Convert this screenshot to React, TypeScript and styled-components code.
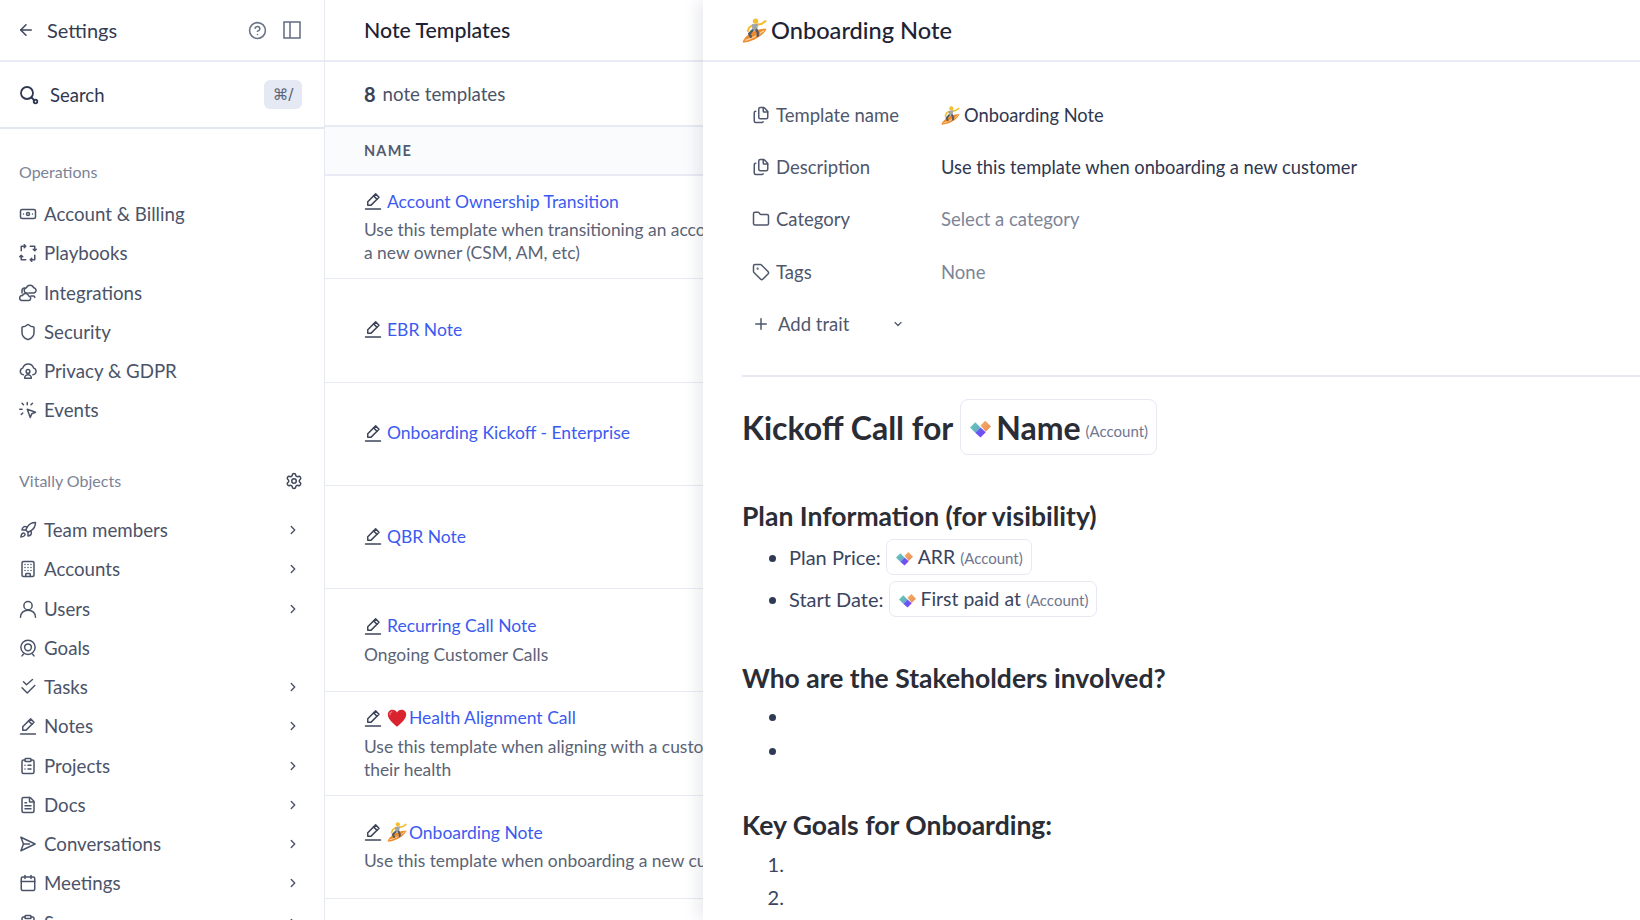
import React from 'react';
import styled, { createGlobalStyle } from 'styled-components';
import {
  ArrowLeft,
  Banknote,
  Building,
  Calendar,
  ChevronDown,
  ChevronRight,
  CircleHelp,
  ClipboardList,
  FileText,
  Files,
  Folder,
  Plus,
  Rocket,
  Settings,
  Shield,
  Tag,
} from 'lucide-react';

const GlobalStyle = createGlobalStyle`
  html, body { margin: 0; padding: 0; height: 100%; overflow: hidden; }
  body { font-family: Lato, "Liberation Sans", sans-serif; background: #fff; color: #2a3147; }
  * { box-sizing: border-box; }
`;

const Page = styled.div`
  position: relative;
  display: flex;
  width: 1640px;
  height: 920px;
  overflow: hidden;
`;

const Sidebar = styled.aside`
  flex: 0 0 325px;
  height: 920px;
  border-right: 1px solid #e6e9f2;
  overflow: hidden;
`;

const SideHead = styled.div`
  display: flex;
  align-items: center;
  height: 62px;
  padding: 0 23px 0 17px;
  border-bottom: 2px solid #e8ebf3;
  color: #3b4358;
`;

const SideTitle = styled.div`
  flex: 1;
  margin-left: 12px;
  font-size: 20px;
  color: #343c52;
`;

const HeadIcons = styled.div`
  display: flex;
  align-items: center;
  gap: 16px;
  color: #6b7388;
`;

const SearchRow = styled.div`
  display: flex;
  align-items: center;
  height: 67px;
  padding: 0 22px 0 19px;
  border-bottom: 2px solid #e3e7f1;
  color: #2f3750;
`;

const SearchLabel = styled.div`
  flex: 1;
  margin-left: 11px;
  font-size: 18.5px;
`;

const Kbd = styled.div`
  display: flex;
  align-items: center;
  justify-content: center;
  width: 38px;
  height: 29px;
  border-radius: 6px;
  background: #e5e9f3;
  color: #5b6478;
  font-size: 15.5px;
  font-family: "DejaVu Sans", sans-serif;
`;

const SectionLabel = styled.div<{ $spaced?: boolean }>`
  display: flex;
  align-items: center;
  justify-content: space-between;
  height: 24px;
  margin-top: ${(p) => (p.$spaced ? '38.5px' : '30px')};
  margin-bottom: ${(p) => (p.$spaced ? '18px' : '11.5px')};
  padding: 0 21px 0 19px;
  font-size: 16px;
  color: #7b8397;

  svg { color: #3f475c; }
`;

const NavRow = styled.div`
  display: flex;
  align-items: center;
  height: 39.25px;
  padding: 0 24px 0 19px;
  font-size: 18.7px;
  color: #4b5368;

  > svg:first-child { flex: 0 0 18px; color: #4b5368; margin-right: 7px; }
`;

const NavLabel = styled.span`
  flex: 1;
`;

const ListPane = styled.section`
  flex: 1;
  min-width: 0;
  overflow: hidden;
`;

const ListTitle = styled.div`
  display: flex;
  align-items: center;
  height: 62px;
  padding-left: 39px;
  border-bottom: 2px solid #e8ebf3;
  font-size: 21.3px;
  font-weight: 500;
  color: #1d2334;
`;

const CountRow = styled.div`
  display: flex;
  align-items: center;
  gap: 7px;
  height: 65px;
  padding-left: 39px;
  border-bottom: 2px solid #e8ebf3;
  font-size: 18.7px;
  color: #4b5368;

  b { font-size: 20px; font-weight: 700; color: #3a4257; }
`;

const ColumnHead = styled.div`
  display: flex;
  align-items: center;
  height: 49px;
  padding-left: 39px;
  border-bottom: 2px solid #e8ebf3;
  background: #fafbfd;
  font-size: 14.5px;
  font-weight: 700;
  letter-spacing: 1.2px;
  color: #535b70;
`;

const TemplateRow = styled.div`
  display: flex;
  flex-direction: column;
  justify-content: center;
  width: 470px;
  height: 103.3px;
  padding: 0 0 2px 39px;
  border-bottom: 1.5px solid #e8ebf3;
`;

const TemplateName = styled.div`
  display: flex;
  align-items: center;
  height: 26px;
  font-size: 17.5px;
  color: #3b5bf0;

  > svg:first-child { flex: 0 0 18px; color: #3d4559; margin-right: 5px; }
  > svg + svg { flex: 0 0 20px; margin-right: 2px; }
`;

const TemplateDesc = styled.div`
  width: 398px;
  margin-top: 4px;
  font-size: 17.4px;
  line-height: 23px;
  color: #5b6376;
`;

const Drawer = styled.section`
  position: absolute;
  top: 0;
  left: 703px;
  bottom: 0;
  right: 0;
  background: #fff;
  box-shadow: -6px 0 14px rgba(60, 70, 100, 0.1);
  overflow: hidden;
`;

const DrawerHead = styled.div`
  display: flex;
  align-items: center;
  gap: 4px;
  height: 62px;
  padding-left: 39px;
  border-bottom: 2px solid #e8ebf3;
  font-size: 23.6px;
  font-weight: 500;
  color: #1d2334;
`;

const Traits = styled.div`
  margin: 27px 0 0 39px;
  padding-bottom: 25px;
  border-bottom: 2px solid #e6e9f2;
`;

const TraitRow = styled.div`
  display: flex;
  align-items: center;
  height: 52.2px;
  padding-left: 10px;
  font-size: 18.5px;
`;

const TraitLabel = styled.div`
  display: flex;
  align-items: center;
  gap: 6px;
  flex: 0 0 189px;
  color: #4f576c;

  svg { flex: 0 0 18px; color: #4f576c; }
`;

const TraitValue = styled.div<{ $muted?: boolean }>`
  display: flex;
  align-items: center;
  gap: 4px;
  font-size: ${(p) => (p.$muted ? '18.5px' : '18.3px')};
  color: ${(p) => (p.$muted ? '#7d8598' : '#2f3750')};
`;

const AddTrait = styled.div`
  display: flex;
  align-items: center;
  height: 52.2px;
  padding-left: 10px;
  font-size: 18.5px;
  color: #4f576c;

  svg:first-child { margin-right: 8px; }
  svg:last-child { margin-left: 43px; }
`;

const Doc = styled.article`
  margin-left: 39px;
  color: #2a2d36;
`;

const H1 = styled.h1`
  display: flex;
  align-items: center;
  gap: 7px;
  margin: 22px 0 0;
  font-size: 32px;
  font-weight: 700;
  line-height: 57px;
  color: #2a2d36;
`;

const H2 = styled.h2<{ $gap: number }>`
  margin: ${(p) => p.$gap}px 0 0;
  font-size: 26.5px;
  font-weight: 700;
  line-height: 36px;
  color: #2a2d36;
`;

const Ul = styled.ul<{ $gap: number }>`
  margin: ${(p) => p.$gap}px 0 0;
  padding: 0 0 0 47px;
  font-size: 20px;
  color: #3a4460;

  li { min-height: 34.5px; line-height: 34.5px; }
  li::marker { color: #2f3a55; }
`;

const Ol = styled.ol`
  margin: 5px 0 0;
  padding: 0 0 0 47px;
  font-size: 20px;
  color: #3a4460;

  li { height: 33.5px; line-height: 33.5px; }
`;

const FieldLine = styled.li`
  && { height: 42px; line-height: 42px; }
`;

const Chip = styled.span<{ $big?: boolean }>`
  display: inline-flex;
  align-items: center;
  vertical-align: ${(p) => (p.$big ? 'baseline' : '-1px')};
  height: ${(p) => (p.$big ? '56px' : '36px')};
  padding: 0 8px 0 9px;
  margin-left: ${(p) => (p.$big ? '0' : '5px')};
  border: 1.5px solid #e6e9f4;
  border-radius: ${(p) => (p.$big ? '8px' : '7px')};
  font-size: ${(p) => (p.$big ? '32px' : '19.4px')};
  font-weight: ${(p) => (p.$big ? 700 : 400)};
  color: ${(p) => (p.$big ? '#2a2d36' : '#3a4460')};

  svg { margin-right: 5px; }
`;

const ChipScope = styled.span<{ $big?: boolean }>`
  margin-left: 5px;
  margin-top: ${(p) => (p.$big ? '9px' : '2px')};
  font-size: 15px;
  font-weight: 400;
  color: #6f7690;
`;

type IconProps = { size?: number };

const Stroke = ({ size = 18, children }: IconProps & { children: React.ReactNode }) => (
  <svg width={size} height={size} viewBox="0 0 24 24" fill="none" stroke="currentColor" strokeWidth="2" strokeLinecap="round" strokeLinejoin="round">
    {children}
  </svg>
);

const NotePen = ({ size = 18 }: IconProps) => (
  <Stroke size={size}>
    <path d="M2 22.5h20" />
    <path d="M15.5 2.5l4.5 4.5L9.5 17.5H5v-4.5z" />
    <path d="M12.8 5.2l4.5 4.5" />
  </Stroke>
);

const SearchKey = () => (
  <svg width="20" height="20" viewBox="0 0 20 20" fill="none" stroke="currentColor" strokeWidth="1.8" strokeLinecap="round">
    <circle cx="8" cy="8" r="6" />
    <path d="M12.5 12.5l3 3" />
    <circle cx="16.5" cy="16.5" r="1.8" />
  </svg>
);

const PaneToggle = () => (
  <svg width="18" height="18" viewBox="0 0 18 18" fill="none" stroke="currentColor" strokeWidth="1.6">
    <rect x="1" y="1" width="16" height="16" />
    <path d="M7 1v16" />
  </svg>
);

const Playbook = () => (
  <Stroke>
    <path d="M3 9V3h6M7 1l2 2-2 2" />
    <path d="M15 3h6v6M23 7l-2 2-2-2" />
    <path d="M21 15v6h-6M17 23l-2-2 2-2" />
    <path d="M9 21H3v-6M1 17l2-2 2 2" />
  </Stroke>
);

const Clouds = () => (
  <Stroke>
    <path d="M13 12h6a3.5 3.5 0 0 0 .5-7A5 5 0 0 0 10 5a3.5 3.5 0 0 0 1 7" />
    <path d="M3.5 22H12a3 3 0 0 0 1-6 4.5 4.5 0 0 0-8.5-.5A3.3 3.3 0 0 0 3.5 22z" />
    <path d="M4 12V8a3 3 0 0 1 4-2.5M16 16h3a2 2 0 0 1 2 2" />
  </Stroke>
);

const PrivacyCloud = () => (
  <Stroke>
    <path d="M6 17a4.5 4.5 0 0 1-1-8.800 7.5 7.5 0 0 1 14.5 0A4.5 4.5 0 0 1 18.5 17" />
    <circle cx="12" cy="12.5" r="2.5" />
    <path d="M7.5 21.5a4.5 4.5 0 0 1 9 0z" />
  </Stroke>
);

const ClickBurst = () => (
  <Stroke>
    <path d="M11 11l4 11 2-5 5-2z" />
    <path d="M11 2v3M4 11H1M6 5L4 3M16 5l2-2M5 16l-2 2" />
  </Stroke>
);

const GoalTarget = () => (
  <Stroke>
    <circle cx="12" cy="11" r="9.5" />
    <circle cx="12" cy="11" r="4.5" />
    <path d="M6 20l-2 2.5M18 20l2 2.5" />
  </Stroke>
);

const StackedChecks = () => (
  <Stroke>
    <path d="M6 5l4 4 8-7" />
    <path d="M4 13l7 7 10-10" />
  </Stroke>
);

const PaperPlane = () => (
  <Stroke>
    <path d="M2.5 3l19 9-19 9 3.500-9z" />
    <path d="M6 12h8" />
  </Stroke>
);

const Person = () => (
  <Stroke>
    <circle cx="12" cy="7.5" r="5.5" />
    <path d="M2 23c0-5.500 4-9.500 10-9.500S22 17.500 22 23" />
  </Stroke>
);

const SurferEmoji = ({ size = 20 }: IconProps) => (
  <svg width={size} height={size} viewBox="0 0 24 24">
    <path d="M.5 23.500c7 .5 19-5 23-13-6-.5-11 1.500-15 4-4 2.500-7 5.500-8 9z" fill="#ef8a2a" />
    <path d="M3 21.500c6-1.500 13-5.500 18-9.500" stroke="#fbd29c" strokeWidth="1.2" fill="none" />
    <circle cx="13" cy="3" r="2.6" fill="#f3bf2f" />
    <path d="M15 6.500l4-1 3.500-2.500" stroke="#f3bf2f" strokeWidth="2" fill="none" strokeLinecap="round" />
    <path d="M10 7L7 9l-1.500 3.500" stroke="#f3bf2f" strokeWidth="2" fill="none" strokeLinecap="round" />
    <path d="M9.500 6l6-.5-1 6.500-4.500.5z" fill="#a0a5ab" />
    <path d="M10 12l-3 3 1.500 3M14 11.500l1.500 3.500-.5 2" stroke="#565b62" strokeWidth="2.4" fill="none" strokeLinecap="round" />
  </svg>
);

const HeartEmoji = () => (
  <svg width="20" height="20" viewBox="0 0 24 24">
    <path d="M12 22.500C5 16.500 1 12.500 1 7.800 1 4.300 3.700 2 6.700 2 9 2 11 3.200 12 5.300 13 3.200 15 2 17.300 2 20.300 2 23 4.300 23 7.800c0 4.700-4 8.700-11 14.700z" fill="#d9232e" />
    <path d="M6 4.500C4.300 5 3.300 6.500 3.500 8.300" stroke="#f07a80" strokeWidth="1.4" fill="none" strokeLinecap="round" />
  </svg>
);

const VitallyMark = ({ size = 16, id }: IconProps & { id: string }) => (
  <svg width={size} height={size} viewBox="0 0 20 20">
    <defs>
      <linearGradient id={`${id}-t`} x1="0" y1="0" x2="1" y2="1">
        <stop offset="0" stopColor="#5fd0b4" />
        <stop offset="1" stopColor="#6c9ec8" />
      </linearGradient>
      <linearGradient id={`${id}-o`} x1="0" y1="0" x2="1" y2="1">
        <stop offset="0" stopColor="#f6b05c" />
        <stop offset="1" stopColor="#e98a62" />
      </linearGradient>
      <linearGradient id={`${id}-p`} x1="0" y1="0" x2="1" y2="1">
        <stop offset="0" stopColor="#4d6cf5" />
        <stop offset="1" stopColor="#8a3cf0" />
      </linearGradient>
    </defs>
    <polygon points="0,10 5,5 10,10 5,15" fill={`url(#${id}-t)`} />
    <polygon points="10,8 14.5,3.5 20,9 15,14" fill={`url(#${id}-o)`} />
    <polygon points="5,15 10,10 15,14.5 10,19.5" fill={`url(#${id}-p)`} />
  </svg>
);

const operations = [
  { label: 'Account & Billing', icon: <Banknote size={18} /> },
  { label: 'Playbooks', icon: <Playbook /> },
  { label: 'Integrations', icon: <Clouds /> },
  { label: 'Security', icon: <Shield size={18} /> },
  { label: 'Privacy & GDPR', icon: <PrivacyCloud /> },
  { label: 'Events', icon: <ClickBurst /> },
];

const objects = [
  { label: 'Team members', icon: <Rocket size={18} />, more: true },
  { label: 'Accounts', icon: <Building size={18} />, more: true },
  { label: 'Users', icon: <Person />, more: true },
  { label: 'Goals', icon: <GoalTarget />, more: false },
  { label: 'Tasks', icon: <StackedChecks />, more: true },
  { label: 'Notes', icon: <NotePen />, more: true },
  { label: 'Projects', icon: <ClipboardList size={18} />, more: true },
  { label: 'Docs', icon: <FileText size={18} />, more: true },
  { label: 'Conversations', icon: <PaperPlane />, more: true },
  { label: 'Meetings', icon: <Calendar size={18} />, more: true },
  { label: 'Surveys', icon: <ClipboardList size={18} />, more: true },
];

const templates: { name: string; emoji?: React.ReactNode; desc?: string }[] = [
  {
    name: 'Account Ownership Transition',
    desc: 'Use this template when transitioning an account to a new owner (CSM, AM, etc)',
  },
  { name: 'EBR Note' },
  { name: 'Onboarding Kickoff - Enterprise' },
  { name: 'QBR Note' },
  { name: 'Recurring Call Note', desc: 'Ongoing Customer Calls' },
  {
    name: 'Health Alignment Call',
    emoji: <HeartEmoji />,
    desc: 'Use this template when aligning with a customer on their health',
  },
  {
    name: 'Onboarding Note',
    emoji: <SurferEmoji size={20} />,
    desc: 'Use this template when onboarding a new customer',
  },
];

export default function App() {
  return (
    <Page>
      <GlobalStyle />
      <Sidebar>
        <SideHead>
          <ArrowLeft size={18} />
          <SideTitle>Settings</SideTitle>
          <HeadIcons>
            <CircleHelp size={19} />
            <PaneToggle />
          </HeadIcons>
        </SideHead>
        <SearchRow>
          <SearchKey />
          <SearchLabel>Search</SearchLabel>
          <Kbd>⌘/</Kbd>
        </SearchRow>
        <SectionLabel>Operations</SectionLabel>
        {operations.map((item) => (
          <NavRow key={item.label}>
            {item.icon}
            <NavLabel>{item.label}</NavLabel>
          </NavRow>
        ))}
        <SectionLabel $spaced>
          Vitally Objects
          <Settings size={18} />
        </SectionLabel>
        {objects.map((item) => (
          <NavRow key={item.label}>
            {item.icon}
            <NavLabel>{item.label}</NavLabel>
            {item.more && <ChevronRight size={14} strokeWidth={2.4} />}
          </NavRow>
        ))}
      </Sidebar>

      <ListPane>
        <ListTitle>Note Templates</ListTitle>
        <CountRow>
          <b>8</b> note templates
        </CountRow>
        <ColumnHead>NAME</ColumnHead>
        {templates.map((t) => (
          <TemplateRow key={t.name}>
            <TemplateName>
              <NotePen />
              {t.emoji}
              {t.name}
            </TemplateName>
            {t.desc && <TemplateDesc>{t.desc}</TemplateDesc>}
          </TemplateRow>
        ))}
      </ListPane>

      <Drawer>
        <DrawerHead>
          <SurferEmoji size={25} />
          Onboarding Note
        </DrawerHead>
        <Traits>
          <TraitRow>
            <TraitLabel>
              <Files size={18} />
              Template name
            </TraitLabel>
            <TraitValue>
              <SurferEmoji size={19} />
              Onboarding Note
            </TraitValue>
          </TraitRow>
          <TraitRow>
            <TraitLabel>
              <Files size={18} />
              Description
            </TraitLabel>
            <TraitValue>Use this template when onboarding a new customer</TraitValue>
          </TraitRow>
          <TraitRow>
            <TraitLabel>
              <Folder size={18} />
              Category
            </TraitLabel>
            <TraitValue $muted>Select a category</TraitValue>
          </TraitRow>
          <TraitRow>
            <TraitLabel>
              <Tag size={18} />
              Tags
            </TraitLabel>
            <TraitValue $muted>None</TraitValue>
          </TraitRow>
          <AddTrait>
            <Plus size={18} />
            Add trait
            <ChevronDown size={12} strokeWidth={2.4} />
          </AddTrait>
        </Traits>
        <Doc>
          <H1>
            Kickoff Call for
            <Chip $big>
              <VitallyMark size={21} id="name" />
              Name
              <ChipScope $big>(Account)</ChipScope>
            </Chip>
          </H1>
          <H2 $gap={42}>Plan Information (for visibility)</H2>
          <Ul $gap={2}>
            <FieldLine>
              Plan Price:
              <Chip>
                <VitallyMark size={17} id="arr" />
                ARR
                <ChipScope>(Account)</ChipScope>
              </Chip>
            </FieldLine>
            <FieldLine>
              Start Date:
              <Chip>
                <VitallyMark size={17} id="paid" />
                First paid at
                <ChipScope>(Account)</ChipScope>
              </Chip>
            </FieldLine>
          </Ul>
          <H2 $gap={40}>Who are the Stakeholders involved?</H2>
          <Ul $gap={3}>
            <li />
            <li />
          </Ul>
          <H2 $gap={39}>Key Goals for Onboarding:</H2>
          <Ol>
            <li />
            <li />
          </Ol>
        </Doc>
      </Drawer>
    </Page>
  );
}
